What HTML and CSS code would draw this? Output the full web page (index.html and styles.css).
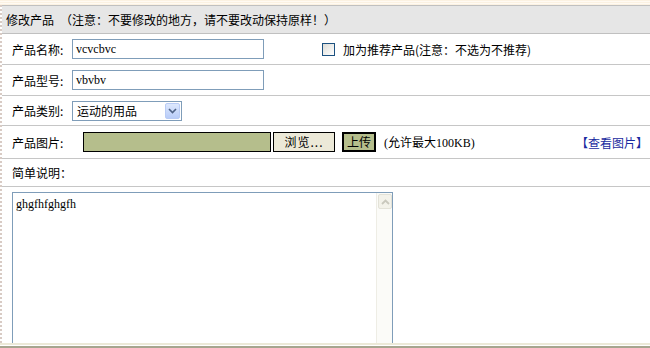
FILE: index.html
```html
<!DOCTYPE html>
<html lang="zh-CN">
<head>
    <meta charset="UTF-8" />
    <title>修改产品</title>
    <link rel="stylesheet" href="styles.css">
</head>
<body>

    <div class="top-strip"></div>

    <div class="frame">
        <div class="head-row">
            <span class="head-title">修改产品</span>
            <span class="head-note">（注意：不要修改的地方，请不要改动保持原样！）</span>
        </div>

        <div class="row row-31">
            <span class="label">产品名称:</span>
            <div class="text-input">vcvcbvc</div>
            <span class="checkbox"></span>
            <span class="check-text">加为推荐产品(注意：不选为不推荐)</span>
        </div>

        <div class="row row-31">
            <span class="label">产品型号:</span>
            <div class="text-input">vbvbv</div>
        </div>

        <div class="row row-30">
            <span class="label">产品类别:</span>
            <div class="select-box">
                <span class="select-text">运动的用品</span>
                <span class="select-btn">
                    <svg width="9" height="6" viewBox="0 0 9 6"><path d="M1 1 L4.5 4.5 L8 1" fill="none" stroke="#4d6185" stroke-width="1.6"/></svg>
                </span>
            </div>
        </div>

        <div class="row row-33">
            <span class="label">产品图片:</span>
            <div class="file-field"></div>
            <div class="browse-btn">浏览...</div>
            <div class="upload-btn">上传</div>
            <span class="limit">(允许最大100KB)</span>
            <a class="view-link" href="#">【查看图片】</a>
        </div>

        <div class="row row-28">
            <span class="label">简单说明：</span>
        </div>

        <div class="memo-row">
            <div class="memo">
                <div class="memo-text">ghgfhfghgfh</div>
                <div class="scrollbar">
                    <span class="scroll-up">
                        <svg width="9" height="6" viewBox="0 0 9 6"><path d="M1 5 L4.5 1.5 L8 5" fill="none" stroke="#c9c8bd" stroke-width="1.8"/></svg>
                    </span>
                </div>
            </div>
        </div>
    </div>

    <div class="bottom-strip"></div>

</body>
</html>
```

FILE: styles.css
```css
body {
    margin: 0;
    background-color: #fff;
    color: #000;
    font-family: "Noto Sans CJK SC", sans-serif;
    font-size: 12px;
    overflow: hidden;
}

.top-strip {
    height: 5px;
    background: repeating-linear-gradient(#fcf2e2 0 1px, #fffaf3 1px 2px);
}

.frame {
    height: 338px;
    overflow: hidden;
    border-left: 2px dotted #d8cbc4;
    box-sizing: border-box;
}

.bottom-strip {
    height: 5px;
    background: linear-gradient(#ece9d8 0 2px, #fff 2px 3px, #a6a58f 3px);
}

.head-row {
    height: 27px;
    display: flex;
    align-items: center;
    padding-left: 4px;
    background-color: #e6e6e6;
    border-top: 1px solid #c0c0c0;
    border-bottom: 1px solid #c0c0c0;
}

.head-note {
    margin-left: 6px;
}

.row {
    display: flex;
    align-items: center;
    padding-left: 10px;
    border-bottom: 1px solid #c6c6c6;
    box-sizing: border-box;
}

.row-31 { height: 31px; }
.row-30 { height: 30px; }
.row-33 { height: 33px; }
.row-28 { height: 28px; }

.label {
    width: 60px;
    flex: none;
}

.text-input {
    width: 192px;
    height: 20px;
    box-sizing: border-box;
    border: 1px solid #7f9db9;
    padding: 1px 3px;
    font-family: "Liberation Serif", serif;
    font-size: 12px;
    line-height: 16px;
}

.checkbox {
    width: 13px;
    height: 13px;
    box-sizing: border-box;
    border: 1px solid #1c5180;
    background: linear-gradient(135deg, #dcdcd7, #fff);
    margin-left: 58px;
}

.check-text {
    margin-left: 8px;
}

.select-box {
    width: 110px;
    height: 20px;
    box-sizing: border-box;
    border: 1px solid #7f9db9;
    display: flex;
    align-items: center;
    justify-content: space-between;
    padding: 1px;
}

.select-text {
    padding-left: 3px;
    font-size: 12px;
}

.select-btn {
    width: 15px;
    height: 16px;
    box-sizing: border-box;
    border: 1px solid #b8cbf5;
    border-radius: 2px;
    background: linear-gradient(#dde8fd, #b8ccf8);
    display: flex;
    align-items: center;
    justify-content: center;
}

.file-field {
    width: 188px;
    height: 20px;
    box-sizing: border-box;
    border: 1px solid #000;
    background-color: #b5be8c;
    margin-left: 11px;
}

.browse-btn {
    width: 62px;
    height: 20px;
    box-sizing: border-box;
    border: 1px solid #000;
    background-color: #ece9d8;
    margin-left: 2px;
    text-align: center;
    line-height: 17px;
    letter-spacing: 1px;
}

.upload-btn {
    width: 34px;
    height: 20px;
    box-sizing: border-box;
    border: 2px solid #000;
    background-color: #b5be8c;
    margin-left: 7px;
    text-align: center;
    line-height: 15px;
}

.limit {
    margin-left: 8px;
    font-family: "Liberation Serif", "Noto Sans CJK SC", serif;
}

.view-link {
    margin-left: auto;
    margin-right: 2px;
    color: #1a2ba0;
    text-decoration: none;
    font-size: 12px;
}

.memo-row {
    padding: 5px 0 0 10px;
}

.memo {
    width: 381px;
    height: 170px;
    box-sizing: border-box;
    border: 1px solid #7f9db9;
    display: flex;
}

.memo-text {
    flex: 1;
    padding: 4px 3px;
    font-family: "Liberation Serif", serif;
    font-size: 12px;
}

.scrollbar {
    width: 16px;
    background-color: #fbfbf8;
    border-left: 1px solid #eeede5;
    padding: 1px 0 0 1px;
    box-sizing: border-box;
}

.scroll-up {
    width: 14px;
    height: 15px;
    box-sizing: border-box;
    border: 1px solid #e3e2d8;
    border-radius: 2px;
    background-color: #f3f2ea;
    display: flex;
    align-items: center;
    justify-content: center;
}
```
